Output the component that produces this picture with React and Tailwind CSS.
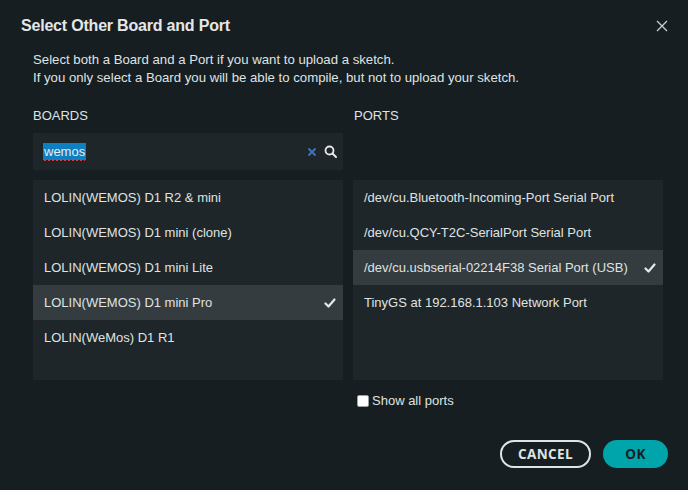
import { useState } from "react";

const BOARDS = [
  "LOLIN(WEMOS) D1 R2 & mini",
  "LOLIN(WEMOS) D1 mini (clone)",
  "LOLIN(WEMOS) D1 mini Lite",
  "LOLIN(WEMOS) D1 mini Pro",
  "LOLIN(WeMos) D1 R1",
];

const PORTS = [
  "/dev/cu.Bluetooth-Incoming-Port Serial Port",
  "/dev/cu.QCY-T2C-SerialPort Serial Port",
  "/dev/cu.usbserial-02214F38 Serial Port (USB)",
  "TinyGS at 192.168.1.103 Network Port",
];

function Check() {
  return (
    <svg width="12" height="10" viewBox="0 0 12 10">
      <path d="M1.5 5.5 L4.5 8.5 L10.5 1.5" fill="none" stroke="#e6e8e9" strokeWidth="2.2" strokeLinecap="round" strokeLinejoin="round" />
    </svg>
  );
}

function ListRow({ label, selected, onClick }) {
  return (
    <div
      onClick={onClick}
      className={`h-[35px] flex items-center justify-between pl-[11px] pr-[7px] cursor-pointer ${selected ? "bg-[#353c3f]" : ""}`}
    >
      <span>{label}</span>
      {selected && <Check />}
    </div>
  );
}

export default function App() {
  const [board, setBoard] = useState(3);
  const [port, setPort] = useState(2);
  const [showAll, setShowAll] = useState(false);

  return (
    <div
      className="w-[688px] h-[490px] bg-[#171e21] text-[#dfe3e4] text-[13px] overflow-hidden"
      style={{ fontFamily: '"Liberation Sans", Arial, sans-serif' }}
    >
      {/* HEADER */}
      <div className="flex items-center justify-between pl-[21px] pr-[20px] pt-[13px] h-[38px]">
        <h1 className="text-[16px] font-semibold text-[#e4e7e8] tracking-[-0.2px]">Select Other Board and Port</h1>
        <svg width="12" height="12" viewBox="0 0 12 12">
          <path d="M1 1 L11 11 M11 1 L1 11" stroke="#c9cdcf" strokeWidth="1.3" />
        </svg>
      </div>

      {/* DESCRIPTION */}
      <div className="pl-[33px] pt-[13px] leading-[18px] text-[13.2px]">
        <div>Select both a Board and a Port if you want to upload a sketch.</div>
        <div>If you only select a Board you will be able to compile, but not to upload your sketch.</div>
      </div>

      {/* COLUMNS */}
      <div className="flex gap-[10px] pl-[33px] pt-[21px]">
        {/* BOARDS */}
        <div className="w-[310px] flex flex-col">
          <div className="h-[15px] leading-[15px]">BOARDS</div>
          <div className="mt-[10px] h-[37px] bg-[#1f2629] flex items-center pl-[10px] pr-[6px]">
            <span className="bg-[#0e7fc0] text-[#e8ecee] px-[1px] leading-[17px] underline decoration-dotted decoration-[#e03a3a] decoration-2 underline-offset-[3px]">
              wemos
            </span>
            <div className="flex-1" />
            <svg width="10" height="10" viewBox="0 0 10 10" className="mr-[7px]">
              <path d="M1.5 1.5 L8.5 8.5 M8.5 1.5 L1.5 8.5" stroke="#3c73c2" strokeWidth="2" />
            </svg>
            <svg width="13" height="13" viewBox="0 0 13 13">
              <circle cx="5.5" cy="5.5" r="4" fill="none" stroke="#e6e8e9" strokeWidth="1.8" />
              <path d="M8.5 8.5 L12 12" stroke="#e6e8e9" strokeWidth="2" strokeLinecap="round" />
            </svg>
          </div>
          <div className="mt-[10px] h-[200px] bg-[#1f2629]">
            {BOARDS.map((b, i) => (
              <ListRow key={b} label={b} selected={board === i} onClick={() => setBoard(i)} />
            ))}
          </div>
        </div>

        {/* PORTS */}
        <div className="w-[310px] flex flex-col">
          <div className="h-[15px] leading-[15px] pl-[1px]">PORTS</div>
          <div className="mt-[57px] h-[200px] bg-[#1f2629]">
            {PORTS.map((p, i) => (
              <ListRow key={p} label={p} selected={port === i} onClick={() => setPort(i)} />
            ))}
          </div>
          <label className="mt-[13px] ml-[4px] flex items-center gap-[3px] cursor-pointer">
            <span
              onClick={() => setShowAll(!showAll)}
              className="w-[12px] h-[12px] bg-white rounded-[2px] border border-[#9aa0a3] flex items-center justify-center"
            >
              {showAll && <span className="w-[6px] h-[6px] bg-[#171e21]" />}
            </span>
            <span className="leading-[15px]">Show all ports</span>
          </label>
        </div>
      </div>

      {/* FOOTER */}
      <div
        className="flex justify-end gap-[12px] pr-[20px] mt-[32px]"
        style={{ fontFamily: '"Open Sans", sans-serif' }}
      >
        <button className="w-[91px] h-[28px] rounded-full border-2 border-[#dfe3e4] text-[#dfe3e4] text-[13.5px] font-bold tracking-[0.4px] flex items-center justify-center">
          CANCEL
        </button>
        <button className="w-[65px] h-[28px] rounded-full bg-[#00a5ab] text-[#171e21] text-[13.5px] font-bold tracking-[0.4px] flex items-center justify-center">
          OK
        </button>
      </div>
    </div>
  );
}
